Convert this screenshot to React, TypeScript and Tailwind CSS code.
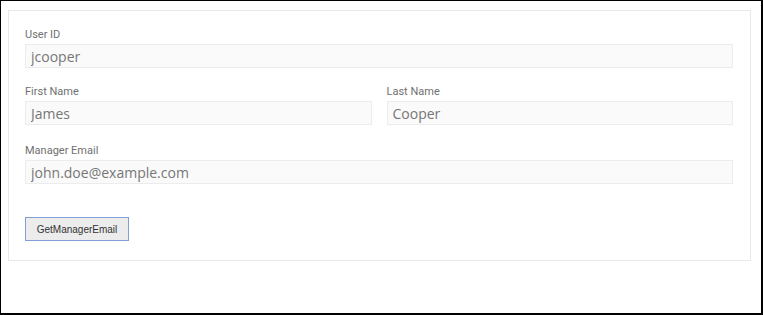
export default function App() {
  const label = "block text-[11px] leading-[13px] text-[#707070] font-['Roboto',sans-serif]";
  const input =
    "block w-full h-[24px] bg-[#fafafa] border border-[#ececec] px-[5px] text-[14px] text-[#767676] font-['Open_Sans',sans-serif] leading-[22px] outline-none";

  return (
    <div className="w-[763px] h-[315px] bg-white border-t border-l border-r-2 border-b-2 border-black pt-[9px] pl-[7px] pr-[10px]">
      <div className="border border-[#e6e8ec] pt-[17px] pb-[19px] pl-[16px] pr-[17px]">
        <div>
          <label className={label}>User ID</label>
          <input className={`${input} mt-[3px]`} defaultValue="jcooper" readOnly />
        </div>
        <div className="grid grid-cols-2 gap-[15px] mt-[17px]">
          <div>
            <label className={label}>First Name</label>
            <input className={`${input} mt-[3px]`} defaultValue="James" readOnly />
          </div>
          <div>
            <label className={label}>Last Name</label>
            <input className={`${input} mt-[3px]`} defaultValue="Cooper" readOnly />
          </div>
        </div>
        <div className="mt-[19px]">
          <label className={label}>Manager Email</label>
          <input className={`${input} mt-[3px]`} defaultValue="john.doe@example.com" readOnly />
        </div>
        <button
          type="button"
          className="mt-[33px] h-[24px] w-[104px] bg-[#ececec] border border-[#7f9fd6] text-[10px] text-[#333] font-['Liberation_Sans',Arial,sans-serif]"
        >
          GetManagerEmail
        </button>
      </div>
    </div>
  );
}
